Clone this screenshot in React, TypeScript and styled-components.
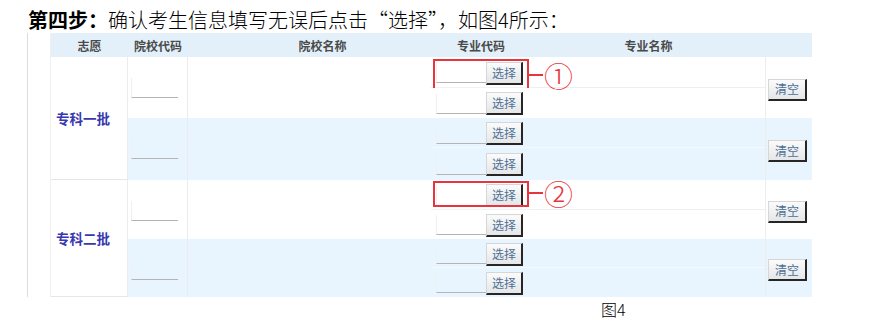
import React from "react";
import styled, { createGlobalStyle } from "styled-components";

const GlobalStyle = createGlobalStyle`
  *, *::before, *::after { box-sizing: border-box; }
  html, body { margin: 0; padding: 0; background: #ffffff; }
  body {
    font-family: "Noto Sans CJK SC", "Noto Sans", sans-serif;
    color: #000000;
  }
`;

const RED = "#e8353d";
const ROW_BLUE = "#e9f5fe";

const Page = styled.div`
  width: 888px;
  height: 321px;
  overflow: hidden;
`;

const Title = styled.p`
  margin: 0;
  padding: 6px 0 0 28px;
  height: 33px;
  font-size: 20px;
  font-weight: 300;
  line-height: 27px;
  white-space: nowrap;
`;

const Step = styled.b`
  font-weight: 700;
`;

const Frame = styled.div`
  margin-left: 27px;
  padding-left: 22px;
  border-left: 1px solid #dcdcdc;
  height: 264px;
`;

const Grid = styled.div`
  display: grid;
  grid-template-columns: 77px 60px 243px 100px 235px 46px;
  grid-template-rows: 24px 31px 30px 30px 32px 30px 29px 29px 29px;
  width: 761px;
  border-left: 1px solid #f0f0f0;
`;

const HeadCell = styled.div<{ $shift?: number }>`
  background: #e3f0fa;
  display: flex;
  align-items: center;
  justify-content: center;
  padding-left: ${(p) => (p.$shift ? p.$shift : 0)}px;
  font-size: 12px;
  font-weight: 700;
  color: #4a4a4a;
  white-space: nowrap;
`;

const BatchCell = styled.div`
  grid-row: span 4;
  display: flex;
  align-items: center;
  padding-left: 5px;
  border-right: 1px solid #ececec;
  border-bottom: 1px solid #e6e6e6;
  background: #ffffff;
  font-size: 13.5px;
  font-weight: 700;
  color: #3838b0;
  white-space: nowrap;
`;

const CodeCell = styled.div<{ $alt: boolean }>`
  grid-row: span 2;
  display: flex;
  align-items: flex-start;
  padding: 21px 0 0 3px;
  border-right: 1px solid #ececec;
  background: ${(p) => (p.$alt ? ROW_BLUE : "#ffffff")};
`;

const NameCell = styled.div<{ $alt: boolean }>`
  grid-row: span 2;
  background: ${(p) => (p.$alt ? ROW_BLUE : "#ffffff")};
`;

const MajorCodeCell = styled.div<{ $alt: boolean; $top: boolean }>`
  position: relative;
  display: flex;
  align-items: center;
  padding: 2px 0 0 5px;
  background: ${(p) => (p.$alt ? ROW_BLUE : "#ffffff")};
  border-bottom: 1px solid ${(p) => (p.$top ? (p.$alt ? "#f3f9fe" : "#f2f2f2") : "transparent")};
`;

const MajorNameCell = styled.div<{ $alt: boolean; $top: boolean }>`
  background: ${(p) => (p.$alt ? ROW_BLUE : "#ffffff")};
  border-right: 1px solid #ececec;
  border-bottom: 1px solid ${(p) => (p.$top ? (p.$alt ? "#f3f9fe" : "#efefef") : "transparent")};
`;

const ClearCell = styled.div<{ $alt: boolean }>`
  grid-row: span 2;
  display: flex;
  align-items: center;
  padding: 4px 0 0 2px;
  background: ${(p) => (p.$alt ? ROW_BLUE : "#ffffff")};
`;

const LineField = styled.input<{ $w: number }>`
  width: ${(p) => p.$w}px;
  height: 20px;
  margin: 0;
  padding: 0;
  border: none;
  border-bottom: 1px solid #b4b4b4;
  border-left: 1px solid #f0f0f0;
  background: transparent;
  outline: none;
`;

const BevelButton = styled.button<{ $w: number; $h: number }>`
  width: ${(p) => p.$w}px;
  height: ${(p) => p.$h}px;
  margin: 0;
  padding: 0;
  font-family: "Noto Sans CJK SC", sans-serif;
  font-size: 12px;
  line-height: 1;
  color: #4d7094;
  background: linear-gradient(#fbfbfb, #e4e6e8);
  border-style: solid;
  border-width: 1px 2px 2px 1px;
  border-color: #d6d6d6 #262626 #262626 #d6d6d6;
  cursor: pointer;
`;

const Highlight = styled.div<{ $top: number; $h: number }>`
  position: absolute;
  left: 2px;
  top: ${(p) => p.$top}px;
  width: 96px;
  height: ${(p) => p.$h}px;
  border: 2px solid ${RED};
  pointer-events: none;
`;

const Callout = styled.div<{ $top: number }>`
  position: absolute;
  left: 98px;
  top: ${(p) => p.$top}px;
  display: flex;
  align-items: center;
  color: ${RED};
  pointer-events: none;
`;

const Lead = styled.span`
  width: 14px;
  height: 2px;
  background: ${RED};
`;

const Mark = styled.span`
  margin-left: 1px;
  font-size: 29px;
  font-weight: 300;
  line-height: 26px;
`;

const Caption = styled.p`
  margin: 0;
  padding: 3px 0 0 601px;
  font-size: 16px;
  font-weight: 300;
  line-height: 18px;
`;

type Note = { mark: string; top: number; h: number; cTop: number };

type Major = { note?: Note };
type School = { majors: [Major, Major] };
type Batch = { name: string; schools: [School, School] };

const batches: Batch[] = [
  {
    name: "专科一批",
    schools: [
      { majors: [{ note: { mark: "①", top: 2, h: 31, cTop: 5 } }, {}] },
      { majors: [{}, {}] },
    ],
  },
  {
    name: "专科二批",
    schools: [
      { majors: [{ note: { mark: "②", top: 1, h: 26, cTop: 0 } }, {}] },
      { majors: [{}, {}] },
    ],
  },
];

export default function App() {
  return (
    <Page>
      <GlobalStyle />
      <Title>
        <Step>第四步：</Step>确认考生信息填写无误后点击“选择”，如图4所示：
      </Title>
      <Frame>
        <Grid>
          <HeadCell>志愿</HeadCell>
          <HeadCell>院校代码</HeadCell>
          <HeadCell $shift={26}>院校名称</HeadCell>
          <HeadCell>专业代码</HeadCell>
          <HeadCell>专业名称</HeadCell>
          <HeadCell />
          {batches.map((b) => (
            <React.Fragment key={b.name}>
              <BatchCell>{b.name}</BatchCell>
              {b.schools.map((s, si) => {
                const alt = si === 1;
                return (
                  <React.Fragment key={si}>
                    <CodeCell $alt={alt}>
                      <LineField $w={47} readOnly />
                    </CodeCell>
                    <NameCell $alt={alt} />
                    {s.majors.map((m, mi) => (
                      <React.Fragment key={mi}>
                        <MajorCodeCell $alt={alt} $top={mi === 0}>
                          <LineField $w={50} readOnly />
                          <BevelButton $w={37} $h={23}>选择</BevelButton>
                          {m.note && (
                            <>
                              <Highlight $top={m.note.top} $h={m.note.h} />
                              <Callout $top={m.note.cTop}>
                                <Lead />
                                <Mark>{m.note.mark}</Mark>
                              </Callout>
                            </>
                          )}
                        </MajorCodeCell>
                        <MajorNameCell $alt={alt} $top={mi === 0} />
                        {mi === 0 && (
                          <ClearCell $alt={alt}>
                            <BevelButton $w={39} $h={22}>清空</BevelButton>
                          </ClearCell>
                        )}
                      </React.Fragment>
                    ))}
                  </React.Fragment>
                );
              })}
            </React.Fragment>
          ))}
        </Grid>
      </Frame>
      <Caption>图4</Caption>
    </Page>
  );
}
